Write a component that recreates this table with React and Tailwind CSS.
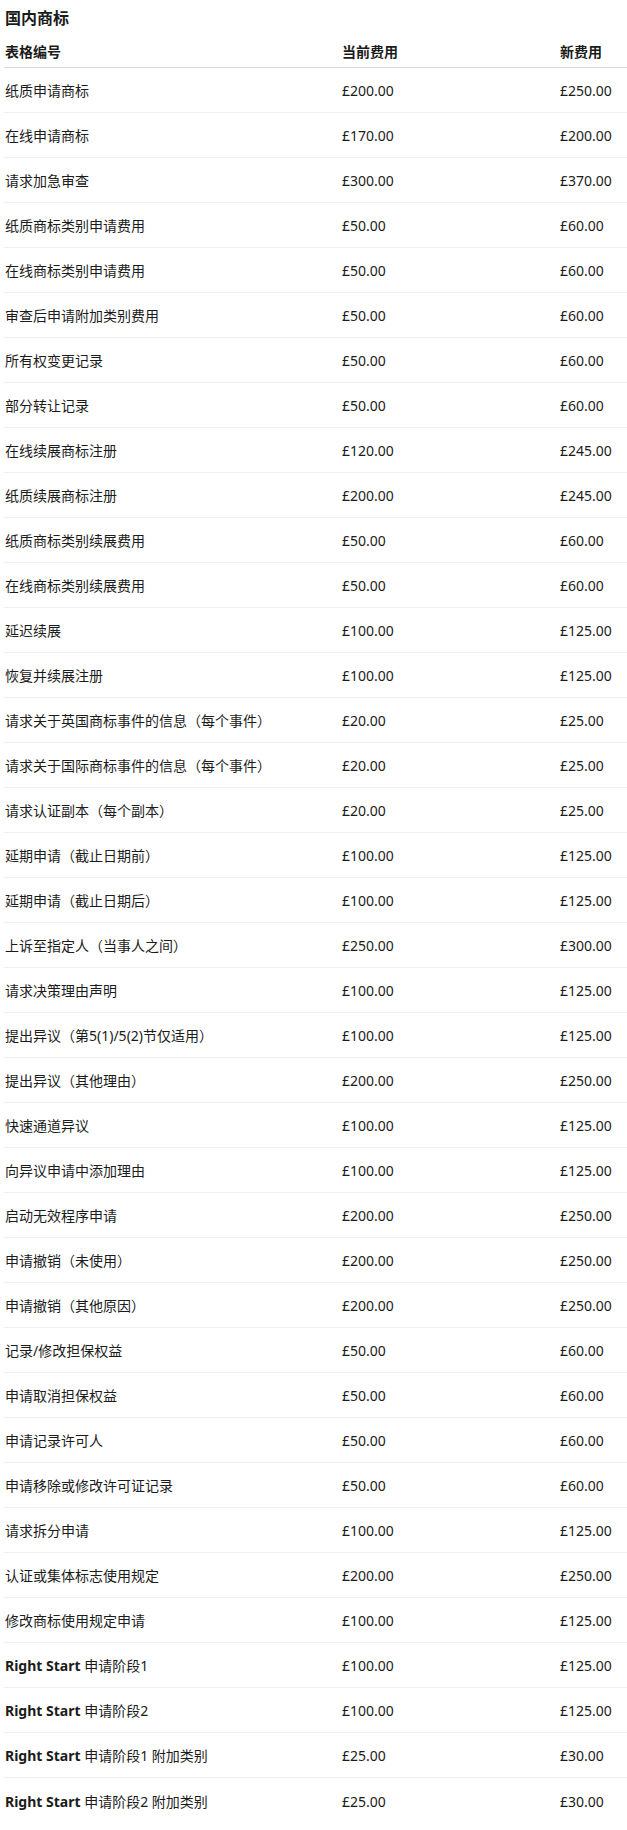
const rows = [
  ['纸质申请商标', '£200.00', '£250.00'],
  ['在线申请商标', '£170.00', '£200.00'],
  ['请求加急审查', '£300.00', '£370.00'],
  ['纸质商标类别申请费用', '£50.00', '£60.00'],
  ['在线商标类别申请费用', '£50.00', '£60.00'],
  ['审查后申请附加类别费用', '£50.00', '£60.00'],
  ['所有权变更记录', '£50.00', '£60.00'],
  ['部分转让记录', '£50.00', '£60.00'],
  ['在线续展商标注册', '£120.00', '£245.00'],
  ['纸质续展商标注册', '£200.00', '£245.00'],
  ['纸质商标类别续展费用', '£50.00', '£60.00'],
  ['在线商标类别续展费用', '£50.00', '£60.00'],
  ['延迟续展', '£100.00', '£125.00'],
  ['恢复并续展注册', '£100.00', '£125.00'],
  ['请求关于英国商标事件的信息（每个事件）', '£20.00', '£25.00'],
  ['请求关于国际商标事件的信息（每个事件）', '£20.00', '£25.00'],
  ['请求认证副本（每个副本）', '£20.00', '£25.00'],
  ['延期申请（截止日期前）', '£100.00', '£125.00'],
  ['延期申请（截止日期后）', '£100.00', '£125.00'],
  ['上诉至指定人（当事人之间）', '£250.00', '£300.00'],
  ['请求决策理由声明', '£100.00', '£125.00'],
  ['提出异议（第5(1)/5(2)节仅适用）', '£100.00', '£125.00'],
  ['提出异议（其他理由）', '£200.00', '£250.00'],
  ['快速通道异议', '£100.00', '£125.00'],
  ['向异议申请中添加理由', '£100.00', '£125.00'],
  ['启动无效程序申请', '£200.00', '£250.00'],
  ['申请撤销（未使用）', '£200.00', '£250.00'],
  ['申请撤销（其他原因）', '£200.00', '£250.00'],
  ['记录/修改担保权益', '£50.00', '£60.00'],
  ['申请取消担保权益', '£50.00', '£60.00'],
  ['申请记录许可人', '£50.00', '£60.00'],
  ['申请移除或修改许可证记录', '£50.00', '£60.00'],
  ['请求拆分申请', '£100.00', '£125.00'],
  ['认证或集体标志使用规定', '£200.00', '£250.00'],
  ['修改商标使用规定申请', '£100.00', '£125.00'],
  ['申请阶段1', '£100.00', '£125.00', true],
  ['申请阶段2', '£100.00', '£125.00', true],
  ['申请阶段1 附加类别', '£25.00', '£30.00', true],
  ['申请阶段2 附加类别', '£25.00', '£30.00', true],
]

export default function App() {
  return (
    <div
      className="min-h-screen bg-white text-[#1b1b1b] text-[14px]"
      style={{ fontFamily: '"Noto Sans", "Noto Sans CJK SC", sans-serif' }}
    >
      <h2 className="pt-[6px] pl-[5px] text-[16px] leading-[24px] font-bold">国内商标</h2>

      <div className="ml-[4px]">
        <div className="grid grid-cols-[337px_218px_1fr] h-[38px] items-end pb-[5px] border-b border-[#d9d9d9] font-bold leading-[20px]">
          <div className="pl-[1px]">表格编号</div>
          <div className="pl-[1px]">当前费用</div>
          <div className="pl-[1px]">新费用</div>
        </div>

        {rows.map(([name, current, next, rightStart], i) => (
          <div
            key={i}
            className="grid grid-cols-[337px_218px_1fr] h-[45px] items-center pt-[2px] border-b border-[#f0f0f0] last:border-b-0 leading-[20px]"
          >
            <div className="pl-[1px]">
              {rightStart && <span className="font-bold">Right Start </span>}
              {name}
            </div>
            <div className="pl-[1px]">{current}</div>
            <div className="pl-[1px]">{next}</div>
          </div>
        ))}
      </div>
    </div>
  )
}
